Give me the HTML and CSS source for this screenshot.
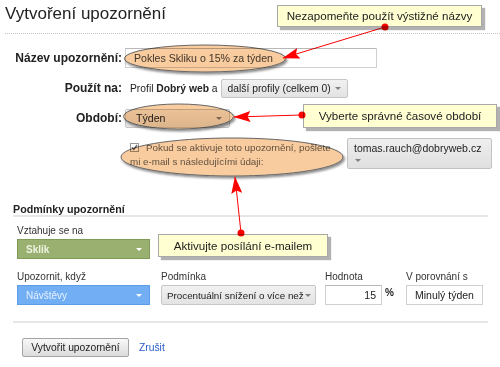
FILE: index.html
```html
<!DOCTYPE html>
<html lang="cs">
<head>
<meta charset="UTF-8">
<meta name="viewport" content="width=device-width, initial-scale=1.0">
<title>Vytvoření upozornění</title>
<link rel="stylesheet" href="styles.css">
</head>
<body>
<div class="page">
    <h1 class="page-title">Vytvoření upozornění</h1>

    <div class="form">
        <div class="row">
            <span class="label">Název upozornění:</span>
            <input type="text" class="text-input name-input" value="Pokles Skliku o 15% za týden">
        </div>
        <div class="row">
            <span class="label">Použít na:</span>
            <span class="profile">Profil <b>Dobrý web</b> a</span>
            <button class="gray-btn profiles-btn">další profily (celkem 0) <i class="caret"></i></button>
        </div>
        <div class="row">
            <span class="label">Období:</span>
            <button class="gray-btn period-btn">Týden <i class="caret"></i></button>
        </div>
        <div class="row row-notify">
            <span class="label"></span>
            <div class="notify">
                <svg class="check" width="9" height="9" viewBox="0 0 9 9"><rect x="0.5" y="0.5" width="8" height="8" fill="#fff" stroke="#9a9a9a"/><path d="M2 4.4 L3.8 6.4 L7 2" fill="none" stroke="#666" stroke-width="1.3"/></svg>Pokud se aktivuje toto upozornění, pošlete mi e-mail s následujícími údaji:
            </div>
            <div class="email-select">tomas.rauch@dobryweb.cz<br><i class="caret"></i></div>
        </div>
    </div>

    <div class="conditions">
        <h2 class="section-header">Podmínky upozornění</h2>
        <div class="field-row">
            <div class="field field-metric">
                <div class="field-label">Vztahuje se na</div>
                <button class="select select-green">Sklik <i class="caret caret-white"></i></button>
            </div>
        </div>
        <div class="field-row">
            <div class="field field-metric">
                <div class="field-label">Upozornit, když</div>
                <button class="select select-blue">Návštěvy <i class="caret caret-white"></i></button>
            </div>
            <div class="field field-condition">
                <div class="field-label">Podmínka</div>
                <button class="gray-btn condition-btn">Procentuální snížení o více než <i class="caret"></i></button>
            </div>
            <div class="field field-value">
                <div class="field-label">Hodnota</div>
                <input type="text" class="text-input value-input" value="15"><span class="percent">%</span>
            </div>
            <div class="field">
                <div class="field-label">V porovnání s</div>
                <div class="compare-box">Minulý týden</div>
            </div>
        </div>
    </div>

    <div class="actions">
        <button class="submit-btn">Vytvořit upozornění</button>
        <a class="cancel-link" href="#">Zrušit</a>
    </div>

    <div class="callout callout-name">Nezapomeňte použít výstižné názvy</div>
    <div class="callout callout-period">Vyberte správné časové období</div>
    <div class="callout callout-email">Aktivujte posílání e-mailem</div>

    <svg class="annotations" width="500" height="367" viewBox="0 0 500 367">
        <defs>
            <filter id="shade" x="-10%" y="-30%" width="130%" height="180%">
                <feDropShadow dx="1.5" dy="2" stdDeviation="1" flood-color="#000" flood-opacity="0.45"/>
            </filter>
            <marker id="head" markerWidth="17" markerHeight="11" refX="16.5" refY="5.5" orient="auto" markerUnits="userSpaceOnUse">
                <path d="M0 0 L17 5.5 L0 11 L3 5.5 Z" fill="#f00"/>
            </marker>
        </defs>
        <g filter="url(#shade)" fill="#f9cc9f" stroke="#666">
            <ellipse cx="205" cy="58.5" rx="80.5" ry="13.5"/>
            <ellipse cx="178.5" cy="116.5" rx="55" ry="12.5"/>
            <ellipse cx="232" cy="157" rx="111" ry="19"/>
        </g>
        <g stroke="#f00" stroke-width="1" fill="none">
            <line x1="385" y1="27" x2="283" y2="58" marker-end="url(#head)"/>
            <line x1="302" y1="115" x2="234" y2="117" marker-end="url(#head)"/>
            <line x1="241" y1="233" x2="235" y2="177" marker-end="url(#head)"/>
        </g>
        <g fill="#f00">
            <circle cx="385" cy="27" r="3.5"/>
            <circle cx="302" cy="115" r="3.5"/>
            <circle cx="241" cy="233" r="3.5"/>
        </g>
    </svg>
</div>
</body>
</html>
```

FILE: styles.css
```css
body {
    margin: 0;
    font-family: 'Liberation Sans', Arial, sans-serif;
    color: #222;
    background-color: #fff;
}
.page {
    position: relative;
    width: 500px;
    height: 367px;
    overflow: hidden;
}
.page-title {
    margin: 4px 0 0 5px;
    padding-bottom: 9px;
    font-size: 17px;
    font-weight: normal;
    line-height: 20px;
    color: #222;
    border-bottom: 1px dotted #c4c4c4;
}

/* horni formular */
.form {
    display: flex;
    flex-direction: column;
    gap: 10px;
    margin-top: 14px;
}
.row {
    display: flex;
    align-items: center;
    height: 20px;
}
.row-notify {
    align-items: flex-start;
    height: 31px;
}
.label {
    box-sizing: border-box;
    width: 125px;
    padding-right: 3px;
    text-align: right;
    font-size: 12px;
    font-weight: bold;
}
.text-input {
    box-sizing: border-box;
    height: 20px;
    margin: 0;
    border: 1px solid #d0d0d0;
    border-top-color: #b8b8b8;
    font-family: inherit;
    color: #444;
    background-color: #fff;
    outline: none;
}
.name-input {
    width: 252px;
    padding: 0 8px;
    font-size: 10.6px;
}
.profile {
    margin-left: 5px;
    margin-right: 3px;
    font-size: 10.3px;
}
.gray-btn {
    box-sizing: border-box;
    display: flex;
    align-items: center;
    justify-content: space-between;
    height: 19px;
    margin: 0;
    padding: 0 6px;
    border: 1px solid #c6c6c6;
    border-radius: 2px;
    background: linear-gradient(#f1f1f1, #e3e3e3);
    font-family: inherit;
    font-size: 10.3px;
    color: #222;
    white-space: nowrap;
}
.profiles-btn {
    width: 127px;
}
.period-btn {
    width: 105px;
    padding: 0 7px 0 10px;
    font-size: 10.6px;
}
.caret {
    display: inline-block;
    flex-shrink: 0;
    width: 0;
    height: 0;
    border-left: 3px solid transparent;
    border-right: 3px solid transparent;
    border-top: 3px solid #808080;
}
.caret-white {
    border-top-color: #fff;
}
.notify {
    box-sizing: border-box;
    width: 205px;
    margin-left: 5px;
    padding-top: 3px;
    font-size: 9.8px;
    line-height: 13.5px;
    color: #666;
}
.check {
    margin-right: 7px;
    vertical-align: -1px;
}
.email-select {
    box-sizing: border-box;
    width: 145px;
    height: 31px;
    margin-left: 12px;
    padding: 3px 6px 0;
    border: 1px solid #c2c2c2;
    border-radius: 2px;
    background: linear-gradient(#eeeeee, #e0e0e0);
    font-size: 10.5px;
    line-height: 12px;
}
.email-select .caret {
    margin-left: 1px;
    vertical-align: 2px;
}

/* podminky */
.conditions {
    width: 475px;
    margin: 33px 0 0 13px;
    padding-bottom: 16px;
    border-bottom: 2px solid #e6e6e6;
}
.section-header {
    margin: 0;
    padding-top: 2px;
    font-size: 10.7px;
    line-height: 11px;
    font-weight: bold;
    border-bottom: 2px solid #e6e6e6;
}
.field-row {
    display: flex;
    margin-top: 8px;
    padding-left: 4px;
}
.field-row + .field-row {
    margin-top: 12px;
}
.field-label {
    margin-bottom: 2px;
    font-size: 10px;
    line-height: 12px;
    color: #333;
}
.field-metric {
    width: 144px;
}
.field-condition {
    width: 164px;
}
.field-value {
    width: 81px;
}
.select {
    box-sizing: border-box;
    display: flex;
    align-items: center;
    justify-content: space-between;
    width: 133px;
    height: 20px;
    margin: 0;
    padding: 0 7px 0 8px;
    font-family: inherit;
    font-size: 10px;
    font-weight: bold;
}
.select-green {
    border: 1px solid #7f9b58;
    background-color: #9ab070;
    color: #eef3e2;
}
.select-blue {
    border: 1px solid #5d9ce6;
    background-color: #72aef3;
    color: #e6f1ff;
    font-weight: normal;
}
.condition-btn {
    width: 155px;
    height: 20px;
    padding: 0 4px 0 5px;
    font-size: 9.8px;
}
.value-input {
    width: 57px;
    padding: 0 5px;
    text-align: right;
    font-size: 10.5px;
    color: #222;
}
.percent {
    margin-left: 3px;
    font-size: 10px;
    font-weight: bold;
    vertical-align: 3px;
}
.compare-box {
    box-sizing: border-box;
    width: 77px;
    height: 20px;
    border: 1px solid #d0d0d0;
    font-size: 10.5px;
    line-height: 18px;
    text-align: center;
}

/* tlacitka */
.actions {
    display: flex;
    align-items: center;
    margin: 15px 0 0 22px;
}
.submit-btn {
    box-sizing: border-box;
    width: 107px;
    height: 19px;
    margin: 0;
    padding: 0;
    border: 1px solid #a4a4a4;
    border-radius: 2px;
    background: linear-gradient(#f8f8f8, #dcdcdc);
    font-family: inherit;
    font-size: 10.3px;
    color: #222;
}
.cancel-link {
    margin-left: 10px;
    font-size: 10.3px;
    color: #2a5bc8;
    text-decoration: none;
}

/* popisky v obrazku */
.callout {
    position: absolute;
    box-sizing: border-box;
    border: 1px solid #a8a8a8;
    background-color: #ffffd2;
    box-shadow: 3px 3px 1px rgba(0, 0, 0, 0.3);
    font-size: 11.6px;
    color: #222;
    text-align: center;
}
.callout-name {
    left: 277px;
    top: 5px;
    width: 205px;
    height: 22px;
    line-height: 20px;
}
.callout-period {
    left: 303px;
    top: 104px;
    width: 194px;
    height: 24px;
    line-height: 22px;
}
.callout-email {
    left: 158px;
    top: 234px;
    width: 170px;
    height: 23px;
    line-height: 21px;
}
.annotations {
    position: absolute;
    left: 0;
    top: 0;
    pointer-events: none;
    mix-blend-mode: multiply;
}
```
